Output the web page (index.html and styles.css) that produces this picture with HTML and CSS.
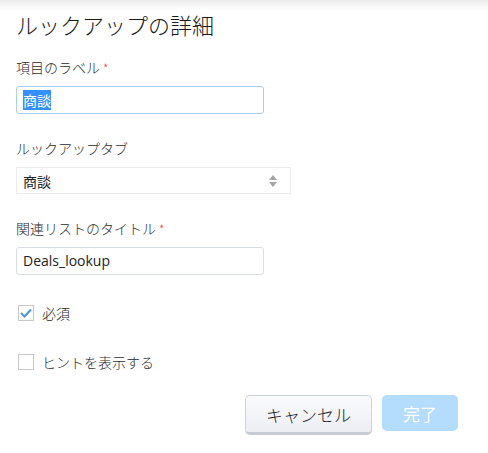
FILE: index.html
```html
<!DOCTYPE html>
<html lang="ja">
  <head>
    <meta charset="UTF-8" />
    <title>ルックアップの詳細</title>
    <link rel="stylesheet" href="styles.css">
  </head>
  <body>
    <div class="dialog">
      <h1>ルックアップの詳細</h1>

      <!-- 項目のラベル -->
      <div class="field first">
        <label>項目のラベル <span class="req">*</span></label>
        <div class="input focused"><span class="sel">商談</span></div>
      </div>

      <!-- ルックアップタブ -->
      <div class="field">
        <label>ルックアップタブ</label>
        <div class="select">
          <span>商談</span>
          <svg class="arrows" width="8" height="12" viewBox="0 0 8 12">
            <path d="M4 0 L8 5 L0 5 Z" fill="#a4a4a4" />
            <path d="M0 7 L8 7 L4 12 Z" fill="#a4a4a4" />
          </svg>
        </div>
      </div>

      <!-- 関連リストのタイトル -->
      <div class="field">
        <label>関連リストのタイトル <span class="req">*</span></label>
        <div class="input">Deals_lookup</div>
      </div>

      <div class="check first-check">
        <span class="box">
          <svg width="12" height="10" viewBox="0 0 12 10">
            <path d="M1 5 L4.5 8.5 L11 1.5" fill="none" stroke="#4a95e0" stroke-width="2" />
          </svg>
        </span>
        <span>必須</span>
      </div>
      <div class="check">
        <span class="box"></span>
        <span>ヒントを表示する</span>
      </div>

      <div class="buttons">
        <button class="cancel">キャンセル</button>
        <button class="done">完了</button>
      </div>
    </div>
  </body>
</html>
```

FILE: styles.css
```css
* {
  margin: 0;
  padding: 0;
  box-sizing: border-box;
}

body {
  font-family: 'Open Sans', 'Noto Sans CJK JP', sans-serif;
  color: #222;
  background: linear-gradient(#ececec 0, #ffffff 10px);
  background-repeat: no-repeat;
  background-color: white;
  height: 453px;
}

.dialog {
  padding: 0 16px;
}

h1 {
  font-family: 'Noto Sans CJK JP', sans-serif;
  font-weight: 300;
  font-size: 22px;
  line-height: 30px;
  padding-top: 9px;
  color: #1a1a1a;
}

/* 項目 */
.field {
  margin-top: 24px;
}
.field.first {
  margin-top: 18px;
}
.field label {
  display: block;
  font-family: 'Noto Sans CJK JP', sans-serif;
  font-weight: 300;
  font-size: 14px;
  line-height: 20px;
  color: #2a2a2a;
}
.req {
  color: #e53935;
  font-size: 12px;
}

.input {
  margin-top: 8px;
  width: 248px;
  height: 28px;
  border: 1px solid #d9dde4;
  border-radius: 3px;
  padding-left: 6px;
  font-size: 14px;
  line-height: 26px;
  color: #222;
}
.input.focused {
  border-color: #a9cdf2;
}
.sel {
  background: #3390ff;
  color: white;
  font-family: 'Noto Sans CJK JP', sans-serif;
}

.select {
  margin-top: 9px;
  width: 275px;
  height: 27px;
  border: 1px solid #ececec;
  display: flex;
  align-items: center;
  justify-content: space-between;
  padding: 0 13px 0 6px;
  font-family: 'Noto Sans CJK JP', sans-serif;
  font-size: 14px;
}

/* チェックボックス */
.check {
  display: flex;
  align-items: center;
  gap: 8px;
  margin-top: 29px;
  padding-left: 2px;
  font-family: 'Noto Sans CJK JP', sans-serif;
  font-weight: 300;
  font-size: 14px;
  line-height: 20px;
  color: #2a2a2a;
}
.check.first-check {
  margin-top: 28px;
}
.box {
  width: 16px;
  height: 16px;
  border: 1px solid #c8c8c8;
  display: flex;
  align-items: center;
  justify-content: center;
}

/* ボタン */
.buttons {
  display: flex;
  gap: 10px;
  margin-top: 23px;
  padding-left: 229px;
  align-items: flex-start;
}
button {
  font-family: 'Noto Sans CJK JP', sans-serif;
  font-weight: 300;
  font-size: 17px;
  border-radius: 5px;
}
.cancel {
  width: 127px;
  height: 40px;
  background: linear-gradient(#fafbfd, #eceef4);
  border: 1px solid #cdd2dc;
  border-bottom: 3px solid #c6cbd6;
  color: #1d1d1d;
}
.done {
  width: 76px;
  height: 36px;
  background: #b3dcfd;
  border: none;
  color: white;
  font-weight: 400;
}
```
